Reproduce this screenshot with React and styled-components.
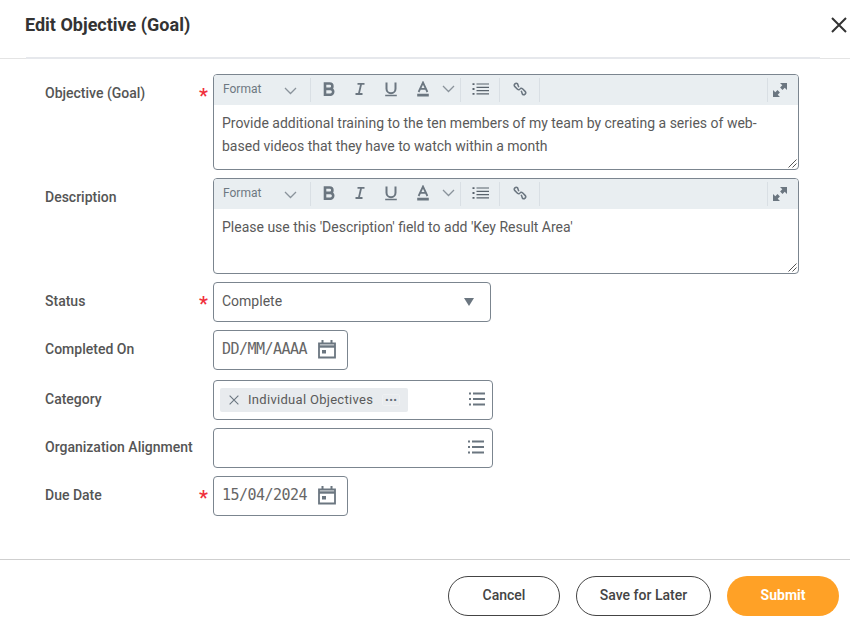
import React from 'react';
import styled, { createGlobalStyle } from 'styled-components';

const GlobalStyle = createGlobalStyle`
  html, body {
    margin: 0;
    padding: 0;
    background: #fff;
  }
  * {
    box-sizing: border-box;
  }
`;

const BoldIcon = () => (
  <svg width="16" height="16" viewBox="0 0 16 16" fill="none" stroke="currentColor" strokeWidth="2.6">
    <path d="M4 2.500h4.700a2.700 2.700 0 0 1 0 5.400H4h5.300a2.900 2.900 0 0 1 0 5.800H4z" />
  </svg>
);

const ItalicIcon = () => (
  <svg width="16" height="16" viewBox="0 0 16 16" fill="none" stroke="currentColor" strokeWidth="1.8">
    <path d="M5.500 2.800h7M3.500 13h7M9.200 2.800 6.800 13" />
  </svg>
);

const UnderlineIcon = () => (
  <svg width="16" height="16" viewBox="0 0 16 16" fill="none" stroke="currentColor" strokeWidth="2">
    <path d="M3.500 1.500v6.200a4.500 4.500 0 0 0 9 0V1.500" />
    <path d="M2.200 14.500h11.600" strokeWidth="1.600" />
  </svg>
);

const TextColorIcon = () => (
  <svg width="16" height="16" viewBox="0 0 16 16" fill="none" stroke="currentColor" strokeWidth="1.800">
    <path d="M3.600 11 8 1.500 12.400 11M5.200 7.800h5.600" />
    <path d="M2.200 14.200h11.600" strokeWidth="2.800" />
  </svg>
);

const ListIcon = () => (
  <svg width="17" height="12" viewBox="0 0 17 12" fill="none" stroke="#59636c">
    <path d="M4.500 1h12.500M4.500 4.300h12.500M4.500 7.600h12.500M4.500 10.900h12.500" strokeWidth="1.200" />
    <path d="M0.500 1.200h2M0.500 6h2M0.500 10.800h2" strokeWidth="1.800" />
  </svg>
);

const LinkIcon = () => (
  <svg width="14" height="14" viewBox="0 0 14 14" fill="none" stroke="currentColor" strokeWidth="1.500">
    <path d="M5.800 5.200 4.600 1.900a1.900 1.900 0 0 0-2.700 2.700l2.600 2.600a1.900 1.900 0 0 0 2.700 0" />
    <path d="M8.200 8.800l1.200 3.300a1.900 1.900 0 0 0 2.700-2.700L9.500 6.800a1.900 1.900 0 0 0-2.700 0" />
  </svg>
);

const ExpandIcon = () => (
  <svg width="14" height="14" viewBox="0 0 14 14" fill="currentColor">
    <path d="M7 0h7v7l-2.300-2.300-2.200 2.200-2.400-2.400 2.200-2.200z" />
    <path d="M7 14H0V7l2.300 2.300 2.200-2.200 2.400 2.400-2.200 2.200z" />
  </svg>
);

const Chevron = ({ size = 13 }) => (
  <svg width={size} height="8" viewBox="0 0 13 8" fill="none" stroke="#8a939b" strokeWidth="1.300">
    <path d="M1 1l5.500 5.500L12 1" />
  </svg>
);

const CalendarIcon = () => (
  <svg width="18" height="20" viewBox="0 0 18 20" fill="none" stroke="currentColor">
    <path d="M1 4.500h16v14H1z" strokeWidth="1.800" />
    <path d="M1 7.500h16" strokeWidth="2.400" />
    <path d="M4.500 1v3M13.500 1v3" strokeWidth="2" />
    <path d="M4 11h4v3.500H4z" fill="currentColor" stroke="none" />
  </svg>
);

const PromptIcon = () => (
  <svg width="16" height="14" viewBox="0 0 16 14" fill="none" stroke="currentColor" strokeWidth="1.800">
    <path d="M0 1.500h2M4 1.500H16M0 7h2M4 7H16M0 12.500h2M4 12.500H16" />
  </svg>
);

const CloseIcon = ({ size = 16, weight = 2 }) => (
  <svg width={size} height={size} viewBox="0 0 16 16" fill="none" stroke="currentColor" strokeWidth={weight}>
    <path d="M1 1l14 14M15 1L1 15" />
  </svg>
);

const Objective = () => (
  <Page>
    <GlobalStyle />
    <Header>
      <Title>Edit Objective (Goal)</Title>
      <CloseButton>
        <CloseIcon />
      </CloseButton>
    </Header>

    <Form>
      <Row>
        <Label>Objective (Goal)</Label>
        <Star>*</Star>
        <Editor value={'Provide additional training to the ten members of my team by creating a series of web-based videos that they have to watch within a month'} />
      </Row>
      <Row>
        <Label>Description</Label>
        <Star />
        <Editor value="Please use this 'Description' field to add 'Key Result Area'" />
      </Row>
      <Row>
        <Label>Status</Label>
        <Star>*</Star>
        <Field $width={278}>
          <FieldText>Complete</FieldText>
          <Caret />
        </Field>
      </Row>
      <Row>
        <Label>Completed On</Label>
        <Star />
        <Field $width={135}>
          <DateText>DD/MM/AAAA</DateText>
          <CalendarSlot>
            <CalendarIcon />
          </CalendarSlot>
        </Field>
      </Row>
      <Row $top={10}>
        <Label>Category</Label>
        <Star />
        <Field $width={280} $tight>
          <Pill>
            <PillRemove>
              <CloseIcon size={10} weight={1.8} />
            </PillRemove>
            <PillText>Individual Objectives</PillText>
            <PillMore>···</PillMore>
          </Pill>
          <PromptSlot>
            <PromptIcon />
          </PromptSlot>
        </Field>
      </Row>
      <Row>
        <Label>Organization Alignment</Label>
        <Star />
        <Field $width={280}>
          <PromptSlot>
            <PromptIcon />
          </PromptSlot>
        </Field>
      </Row>
      <Row>
        <Label>Due Date</Label>
        <Star>*</Star>
        <Field $width={135}>
          <DateText>15/04/2024</DateText>
          <CalendarSlot>
            <CalendarIcon />
          </CalendarSlot>
        </Field>
      </Row>
    </Form>

    <Footer>
      <FooterButton $width={112}>Cancel</FooterButton>
      <FooterButton $width={135}>Save for Later</FooterButton>
      <SubmitButton>Submit</SubmitButton>
    </Footer>
  </Page>
);

const Editor = ({ value }) => (
  <EditorBox>
    <Toolbar>
      <FormatSelect>
        <FormatLabel>Format</FormatLabel>
        <Chevron />
      </FormatSelect>
      <ToolGroup>
        <ToolButton $width={36}><BoldIcon /></ToolButton>
        <ToolButton $width={25}><ItalicIcon /></ToolButton>
        <ToolButton $width={37}><UnderlineIcon /></ToolButton>
        <ToolButton $width={28}><TextColorIcon /></ToolButton>
        <ToolButton $width={23}><Chevron /></ToolButton>
      </ToolGroup>
      <ToolGroup>
        <ToolButton $width={38}><ListIcon /></ToolButton>
      </ToolGroup>
      <ToolGroup>
        <ToolButton $width={39}><LinkIcon /></ToolButton>
      </ToolGroup>
      <ExpandButton>
        <ExpandIcon />
      </ExpandButton>
    </Toolbar>
    <EditorText>{value}</EditorText>
    <ResizeGrip viewBox="0 0 9 9" fill="none" stroke="#555">
      <path d="M0.500 8.500l8-8M4.500 8.500l4-4" />
    </ResizeGrip>
  </EditorBox>
);

const Page = styled.div`
  width: 850px;
  height: 625px;
  overflow: hidden;
  display: flex;
  flex-direction: column;
  background: #fff;
  font-family: Roboto, "Liberation Sans", sans-serif;
  color: #494949;
`;

const Header = styled.header`
  height: 59px;
  flex: none;
  display: flex;
  align-items: flex-start;
  justify-content: space-between;
  padding: 14px 0 0 25px;
  border-bottom: 1px solid #e4e4e4;
  position: relative;

  &::after {
    content: '';
    position: absolute;
    left: 26px;
    right: 30px;
    bottom: -1px;
    height: 2px;
    background: #e6e8ec;
  }
`;

const Title = styled.h1`
  margin: 0;
  font-size: 18px;
  line-height: 22px;
  font-weight: 700;
  color: #333;
`;

const CloseButton = styled.div`
  width: 22px;
  height: 22px;
  display: flex;
  align-items: center;
  justify-content: center;
  color: #333;
`;

const Form = styled.main`
  flex: 1;
  padding: 15px 0 0 45px;
`;

const Row = styled.div`
  display: flex;
  align-items: flex-start;
  margin-top: ${props => props.$top || 8}px;

  &:first-child {
    margin-top: 0;
  }
`;

const Label = styled.label`
  width: 154px;
  flex: none;
  padding-top: 9px;
  font-size: 14px;
  line-height: 20px;
  font-weight: 500;
  color: #555;
  white-space: nowrap;
`;

const Star = styled.span`
  width: 14px;
  flex: none;
  padding-top: 12px;
  font-size: 20px;
  line-height: 20px;
  font-weight: 500;
  color: #f0303c;
`;

const EditorBox = styled.div`
  width: 586px;
  height: 96px;
  position: relative;
  border: 1px solid #7b858f;
  border-radius: 4px;
  overflow: hidden;
`;

const Toolbar = styled.div`
  height: 30px;
  display: flex;
  align-items: center;
  background: #e9eef1;
  color: #6b7680;
`;

const FormatSelect = styled.div`
  width: 97px;
  height: 24px;
  flex: none;
  display: flex;
  align-items: center;
  justify-content: space-between;
  padding: 0 13px 0 9px;
  border-right: 1px solid #d9dfe4;

  svg {
    margin-top: 2px;
  }
`;

const FormatLabel = styled.span`
  margin-bottom: 3px;
  font-size: 12px;
  color: #6e7881;
`;

const ToolGroup = styled.div`
  display: flex;
  align-items: center;
  height: 24px;
  padding-bottom: 2px;
  border-right: 1px solid #d9dfe4;
`;

const ToolButton = styled.div`
  width: ${props => props.$width}px;
  flex: none;
  display: flex;
  align-items: center;
  justify-content: center;
`;

const ExpandButton = styled.div`
  margin-left: auto;
  width: 31px;
  height: 24px;
  display: flex;
  align-items: center;
  justify-content: center;
  padding-right: 6px;
  border-left: 1px solid #d9dfe4;
`;

const EditorText = styled.div`
  padding: 7px 30px 0 8px;
  font-size: 14px;
  line-height: 23px;
  color: #5a5a5a;
`;

const ResizeGrip = styled.svg`
  position: absolute;
  right: 1px;
  bottom: 1px;
  width: 9px;
  height: 9px;
`;

const Field = styled.div`
  width: ${props => props.$width}px;
  height: 40px;
  flex: none;
  display: flex;
  align-items: center;
  justify-content: space-between;
  padding: 0 ${props => (props.$tight ? 7 : 8)}px 0 ${props => (props.$tight ? 6 : 8)}px;
  border: 1px solid #7b858f;
  border-radius: 4px;
  color: #6b7680;
`;

const FieldText = styled.span`
  margin-bottom: 2px;
  font-size: 14px;
  color: #5a5a5a;
`;

const DateText = styled.span`
  margin-bottom: 2px;
  font-family: "DejaVu Sans Mono", "Liberation Mono", monospace;
  font-size: 15px;
  letter-spacing: -0.53px;
  color: #666;
`;

const Caret = styled.span`
  width: 0;
  height: 0;
  margin-right: 8px;
  border-left: 5px solid transparent;
  border-right: 5px solid transparent;
  border-top: 8px solid #6b7680;
`;

const CalendarSlot = styled.span`
  display: flex;
  margin-left: auto;
  margin-right: 3px;
  margin-bottom: 2px;
`;

const PromptSlot = styled.span`
  display: flex;
  margin-left: auto;
  margin-right: 0;
  margin-bottom: 2px;
`;

const Pill = styled.div`
  width: 188px;
  height: 24px;
  display: flex;
  align-items: center;
  padding: 0 8px 0 9px;
  background: #e8ebee;
  border-radius: 2px;
`;

const PillRemove = styled.span`
  display: flex;
  color: #6b7680;
`;

const PillText = styled.span`
  margin-left: 9px;
  margin-bottom: 2px;
  font-size: 13px;
  letter-spacing: 0.3px;
  color: #5a5a5a;
  white-space: nowrap;
`;

const PillMore = styled.span`
  margin-left: auto;
  width: 18px;
  height: 12px;
  display: flex;
  align-items: center;
  justify-content: center;
  font-size: 14px;
  font-weight: 700;
  color: #5f6a74;
  border: 1px solid #eef0f2;
  border-radius: 2px;
`;

const Footer = styled.footer`
  height: 66px;
  flex: none;
  display: flex;
  justify-content: flex-end;
  gap: 16px;
  padding: 16px 11px 0 0;
  border-top: 1px solid #cfcfcf;
`;

const FooterButton = styled.button`
  width: ${props => props.$width}px;
  height: 40px;
  padding: 0 0 2px;
  background: #fff;
  border: 1px solid #444;
  border-radius: 20px;
  font-family: inherit;
  font-size: 14px;
  font-weight: 500;
  color: #444;
`;

const SubmitButton = styled.button`
  width: 112px;
  height: 40px;
  padding: 0 0 2px;
  background: #ffa126;
  border: none;
  border-radius: 20px;
  font-family: inherit;
  font-size: 14px;
  font-weight: 700;
  color: #fff;
`;

export default Objective;
